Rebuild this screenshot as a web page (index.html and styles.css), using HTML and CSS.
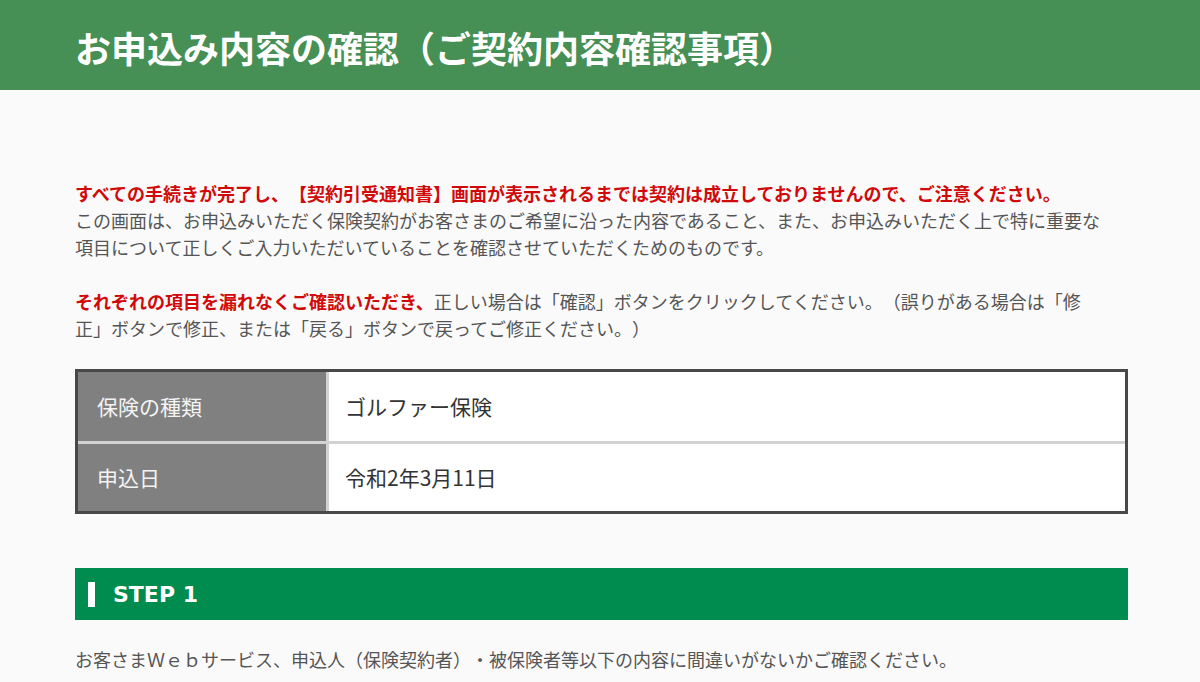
FILE: index.html
```html
<!DOCTYPE html>
<html lang="ja">
<head>
<meta charset="utf-8">
<title>お申込み内容の確認</title>
<link rel="stylesheet" href="styles.css">
</head>
<body>
<header class="page-header">
  <h1 class="page-title">お申込み内容の確認（ご契約内容確認事項）</h1>
</header>
<main class="content">
  <div class="intro">
    <p class="notice"><strong class="alert">すべての手続きが完了し、【契約引受通知書】画面が表示されるまでは契約は成立しておりませんので、ご注意ください。</strong><br>この画面は、お申込みいただく保険契約がお客さまのご希望に沿った内容であること、また、お申込みいただく上で特に重要な項目について正しくご入力いただいていることを確認させていただくためのものです。</p>
    <p class="notice"><strong class="alert">それぞれの項目を漏れなくご確認いただき、</strong>正しい場合は「確認」ボタンをクリックしてください。（誤りがある場合は「修正」ボタンで修正、または「戻る」ボタンで戻ってご修正ください。）</p>
  </div>
  <table class="summary">
    <tr class="row">
      <th class="label">保険の種類</th>
      <td class="value">ゴルファー保険</td>
    </tr>
    <tr class="row last">
      <th class="label">申込日</th>
      <td class="value">令和2年3月11日</td>
    </tr>
  </table>
  <h2 class="step"><span class="step-mark"></span><span class="step-text">STEP 1</span></h2>
  <p class="step-desc">お客さまＷｅｂサービス、申込人（保険契約者）・被保険者等以下の内容に間違いがないかご確認ください。</p>
</main>
</body>
</html>
```

FILE: styles.css
```css
html, body {
  margin: 0;
  padding: 0;
}
body {
  background: #fafafa;
  color: #555;
  font-family: "Noto Sans CJK JP", "Noto Sans", sans-serif;
  font-size: 18px;
  line-height: 27px;
  text-spacing-trim: space-all;
}
.page-header {
  height: 90px;
  background: #468f55;
  display: flex;
  align-items: center;
  padding: 4px 75px 0;
  box-sizing: border-box;
}
.page-title {
  margin: 0;
  color: #fff;
  font-size: 36px;
  font-weight: 700;
  line-height: 44px;
  letter-spacing: 0;
}
.content {
  width: 1053px;
  margin-left: 75px;
  padding-top: 90px;
}
.intro {
  width: 1040px;
}
.notice {
  margin: 0 0 27px;
}
.alert {
  color: #d00a0a;
  font-weight: 700;
}
.summary {
  width: 100%;
  border-collapse: separate;
  border-spacing: 0;
  border: 3px solid #484848;
  background: #fff;
  font-size: 21px;
}
.label {
  width: 251px;
  height: 69px;
  background: #808080;
  color: #f4f4f4;
  font-weight: 400;
  text-align: left;
  padding: 0 19px;
  box-sizing: border-box;
  border-right: 3px solid #d2d2d2;
  border-bottom: 3px solid #d2d2d2;
  vertical-align: middle;
}
.value {
  height: 69px;
  color: #333;
  padding: 0 16px;
  border-bottom: 3px solid #d2d2d2;
  vertical-align: middle;
}
.last .label,
.last .value {
  border-bottom: 0;
  height: 67px;
}
.step {
  margin: 54px 0 0;
  height: 52px;
  background: #008c4f;
  display: flex;
  align-items: center;
  padding-left: 13px;
}
.step-mark {
  width: 7px;
  height: 25px;
  background: #fff;
  margin-right: 18px;
}
.step-text {
  color: #fff;
  font-family: "DejaVu Sans", "Noto Sans", sans-serif;
  font-size: 22px;
  font-weight: 700;
}
.step-desc {
  margin: 26px 0 0;
}
```
